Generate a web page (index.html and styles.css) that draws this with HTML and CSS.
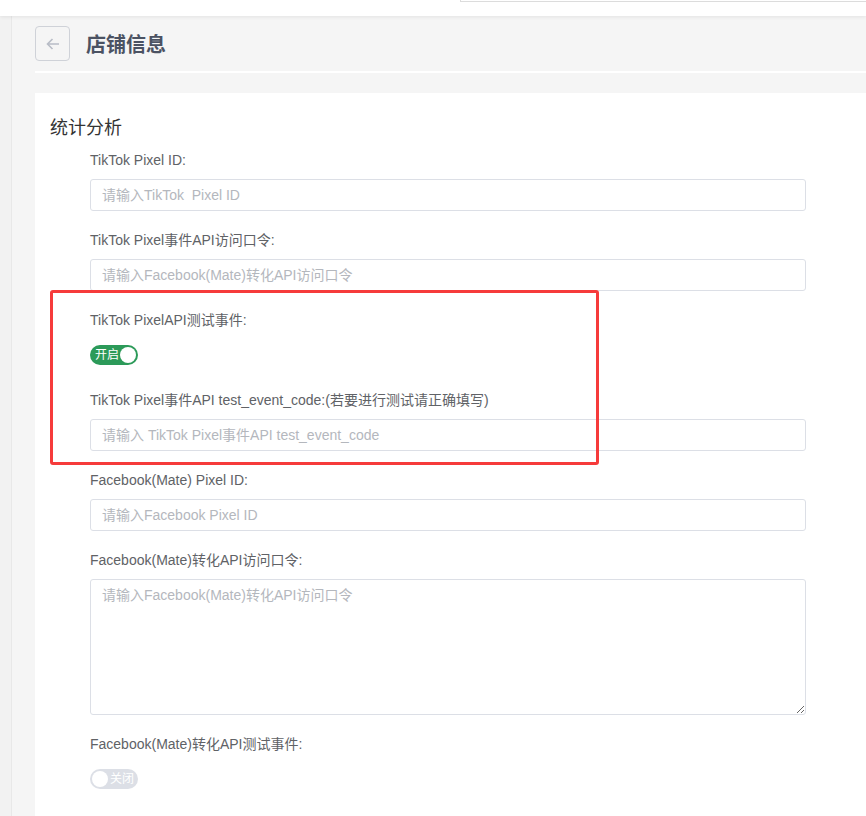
FILE: index.html
```html
<!DOCTYPE html>
<html>
<head>
    <meta charset="UTF-8">
    <title>店铺信息</title>
    <link rel="stylesheet" href="styles.css">
</head>
<body>
    <div class="topbar">
        <div class="search-edge"></div>
    </div>
    <div class="layout">
        <div class="side-strip"></div>
        <div class="main">
            <div class="page-head">
                <button class="back-btn">
                    <svg width="16" height="16" viewBox="0 0 16 16">
                        <path d="M14 8H2.5M7.5 3L2.5 8l5 5" fill="none" stroke="#b8bcc6" stroke-width="1.6"/>
                    </svg>
                </button>
                <h1 class="page-title">店铺信息</h1>
            </div>
            <div class="head-line"></div>

            <div class="card">
                <h2 class="section-title">统计分析</h2>

                <div class="form-item">
                    <div class="label">TikTok Pixel ID:</div>
                    <input class="field" type="text" placeholder="请输入TikTok  Pixel ID">
                </div>
                <div class="form-item">
                    <div class="label">TikTok Pixel事件API访问口令:</div>
                    <input class="field" type="text" placeholder="请输入Facebook(Mate)转化API访问口令">
                </div>
                <div class="form-item">
                    <div class="label">TikTok PixelAPI测试事件:</div>
                    <div class="switch-row">
                        <span class="switch on"><span class="switch-text">开启</span><span class="knob"></span></span>
                    </div>
                </div>
                <div class="form-item">
                    <div class="label">TikTok Pixel事件API test_event_code:(若要进行测试请正确填写)</div>
                    <input class="field" type="text" placeholder="请输入 TikTok Pixel事件API test_event_code">
                </div>
                <div class="form-item">
                    <div class="label">Facebook(Mate) Pixel ID:</div>
                    <input class="field" type="text" placeholder="请输入Facebook Pixel ID">
                </div>
                <div class="form-item">
                    <div class="label">Facebook(Mate)转化API访问口令:</div>
                    <textarea class="field area" placeholder="请输入Facebook(Mate)转化API访问口令"></textarea>
                </div>
                <div class="form-item">
                    <div class="label">Facebook(Mate)转化API测试事件:</div>
                    <div class="switch-row">
                        <span class="switch off"><span class="knob"></span><span class="switch-text">关闭</span></span>
                    </div>
                </div>

                <div class="highlight"></div>
            </div>
        </div>
    </div>
</body>
</html>
```

FILE: styles.css
```css
* {
    box-sizing: border-box;
}

body {
    margin: 0;
    font-family: "Liberation Sans", "Noto Sans CJK SC", sans-serif;
    background: #f5f5f5;
    color: #333;
    height: 816px;
    overflow: hidden;
}

.topbar {
    height: 16px;
    background: white;
    box-shadow: 0 1px 4px rgba(0,0,0,0.08);
    position: relative;
    z-index: 2;
}

.search-edge {
    margin-left: 460px;
    height: 2px;
    border-bottom: 1px solid #dcdcdc;
    border-left: 1px solid #dcdcdc;
}

.layout {
    display: flex;
    height: 800px;
}

.side-strip {
    width: 12px;
    background: #f2f2f2;
    border-right: 1px solid #e8e8e8;
}

.main {
    flex: 1;
    padding-left: 23px;
    padding-top: 10px;
}

.page-head {
    display: flex;
    align-items: center;
    height: 35px;
}

.back-btn {
    width: 35px;
    height: 35px;
    border: 1px solid #cfd2d8;
    border-radius: 4px;
    background: transparent;
    display: flex;
    align-items: center;
    justify-content: center;
    padding: 0;
}

.page-title {
    margin: 0 0 0 16px;
    font-size: 20px;
    font-weight: bold;
    color: #4b5262;
}

.head-line {
    margin-top: 10px;
    height: 2px;
    background: white;
}

.card {
    position: relative;
    margin-top: 20px;
    background: white;
    padding: 23px 0 40px 15px;
    height: 760px;
}

.section-title {
    margin: 0 0 10px;
    font-size: 18px;
    font-weight: normal;
    line-height: 24px;
    color: #333;
}

.form-item {
    padding-left: 40px;
    margin-bottom: 19px;
}

.label {
    font-size: 14px;
    line-height: 20px;
    color: #606266;
    margin-bottom: 9px;
}

.field {
    display: block;
    width: 716px;
    height: 32px;
    border: 1px solid #dcdfe6;
    border-radius: 3px;
    padding: 0 11px;
    font-family: inherit;
    font-size: 14px;
    color: #606266;
    background: white;
    outline: none;
}

.field::placeholder {
    color: #b4b7bd;
}

.area {
    height: 136px;
    padding: 5px 11px;
    line-height: 20px;
    resize: vertical;
}

.switch-row {
    height: 32px;
    display: flex;
    align-items: center;
}

.switch {
    width: 48px;
    height: 20px;
    border-radius: 10px;
    display: flex;
    align-items: center;
    padding: 0 2px;
    font-size: 12px;
    color: white;
}

.switch.on {
    background: #2c9a59;
    justify-content: space-between;
    padding-left: 5px;
}

.switch.off {
    background: #dcdfe6;
    gap: 2px;
}

.knob {
    width: 16px;
    height: 16px;
    border-radius: 50%;
    background: white;
}

.switch-text {
    line-height: 20px;
}

.highlight {
    position: absolute;
    left: 15px;
    top: 197px;
    width: 549px;
    height: 175px;
    border: 3px solid #f63b3b;
    border-radius: 3px;
}
```
